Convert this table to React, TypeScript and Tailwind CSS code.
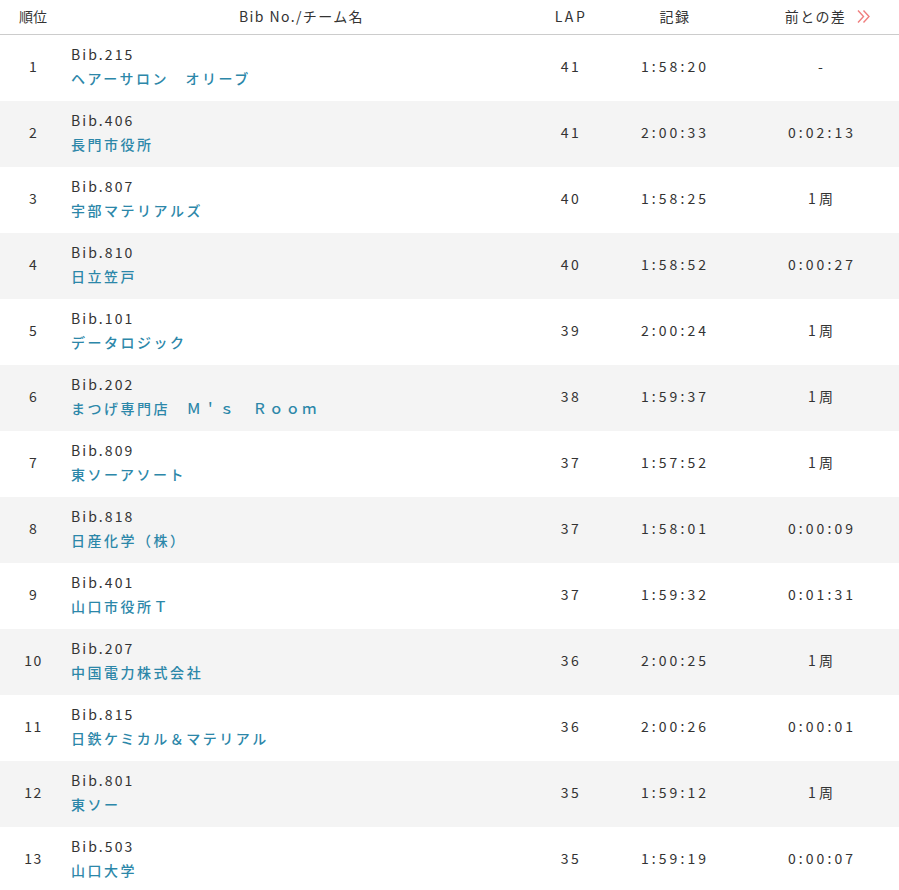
const rows = [
  { rank: 1, bib: '215', team: 'ヘアーサロン　オリーブ', lap: 41, time: '1:58:20', diff: '-' },
  { rank: 2, bib: '406', team: '長門市役所', lap: 41, time: '2:00:33', diff: '0:02:13' },
  { rank: 3, bib: '807', team: '宇部マテリアルズ', lap: 40, time: '1:58:25', diff: '1周' },
  { rank: 4, bib: '810', team: '日立笠戸', lap: 40, time: '1:58:52', diff: '0:00:27' },
  { rank: 5, bib: '101', team: 'データロジック', lap: 39, time: '2:00:24', diff: '1周' },
  { rank: 6, bib: '202', team: 'まつげ専門店　Ｍ＇ｓ　Ｒｏｏｍ', lap: 38, time: '1:59:37', diff: '1周' },
  { rank: 7, bib: '809', team: '東ソーアソート', lap: 37, time: '1:57:52', diff: '1周' },
  { rank: 8, bib: '818', team: '日産化学（株）', lap: 37, time: '1:58:01', diff: '0:00:09' },
  { rank: 9, bib: '401', team: '山口市役所Ｔ', lap: 37, time: '1:59:32', diff: '0:01:31' },
  { rank: 10, bib: '207', team: '中国電力株式会社', lap: 36, time: '2:00:25', diff: '1周' },
  { rank: 11, bib: '815', team: '日鉄ケミカル＆マテリアル', lap: 36, time: '2:00:26', diff: '0:00:01' },
  { rank: 12, bib: '801', team: '東ソー', lap: 35, time: '1:59:12', diff: '1周' },
  { rank: 13, bib: '503', team: '山口大学', lap: 35, time: '1:59:19', diff: '0:00:07' },
];

const cols = 'grid grid-cols-[66px_471px_68px_140px_1fr]';

function Chevrons() {
  return (
    <svg width="15" height="15" viewBox="0 0 15 15" fill="none" stroke="#f07f7f" strokeWidth="1.4">
      <path d="M2 1.5 L7.5 7.5 L2 13.5" />
      <path d="M7.5 1.5 L13 7.5 L7.5 13.5" />
    </svg>
  );
}

export default function App() {
  return (
    <div className="w-[899px] bg-white text-[14px] text-[#333] tracking-[0.1em]" style={{ fontFamily: '"Noto Sans CJK JP", "Noto Sans", sans-serif' }}>
      {/* header */}
      <div className={`${cols} h-[35px] items-center border-b border-[#cccccc] pb-px`}>
        <div className="text-center tracking-normal">順位</div>
        <div className="text-center">Bib No./チーム名</div>
        <div className="text-center tracking-[0.18em]">LAP</div>
        <div className="text-center">記録</div>
        <div className="flex items-center justify-center gap-[10px] pl-3">
          <span>前との差</span>
          <Chevrons />
        </div>
      </div>

      {rows.map((r, i) => (
        <div key={r.rank} className={`${cols} h-[66px] items-center pb-1 ${i % 2 === 1 ? 'bg-[#f4f4f4]' : 'bg-white'}`}>
          <div className="pl-px text-center">{r.rank}</div>
          <div className="pl-[5px] leading-[24px]">
            <div className="tracking-[0.15em]">Bib.{r.bib}</div>
            <div className="font-medium text-[#2c87a9] tracking-[0.18em]">{r.team}</div>
          </div>
          <div className="text-center tracking-[0.18em]">{r.lap}</div>
          <div className="text-center tracking-[0.22em]">{r.time}</div>
          <div className="text-center tracking-[0.22em]">{r.diff}</div>
        </div>
      ))}
    </div>
  );
}
